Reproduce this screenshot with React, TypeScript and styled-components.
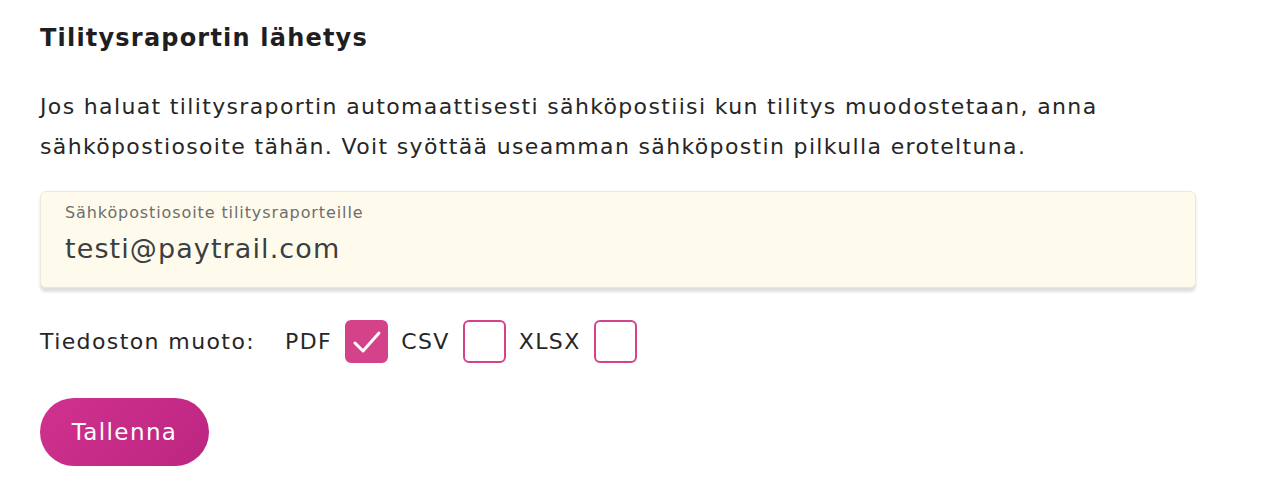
import React, { useState } from 'react';
import styled, { createGlobalStyle } from 'styled-components';

const GlobalStyle = createGlobalStyle`
  body {
    margin: 0;
    background: #fff;
    font-family: "DejaVu Sans", "Noto Sans", sans-serif;
    color: #262626;
  }
`;

const Page = styled.div`
  padding: 20px 40px;
  width: 1156px;
`;

const Heading = styled.h2`
  margin: 0;
  font-size: 24px;
  font-weight: 700;
  letter-spacing: 1.2px;
  color: #1f1f23;
  line-height: 36px;
`;

const Intro = styled.p`
  margin: 31px 0 0;
  font-size: 22px;
  letter-spacing: 1.35px;
  line-height: 40px;
  color: #262626;
`;

const Field = styled.label`
  display: flex;
  flex-direction: column;
  margin-top: 24px;
  padding: 11px 24px 18px;
  background: #fffbec;
  border: 1px solid #ece9dc;
  border-radius: 6px;
  box-shadow: 0 4px 3px rgba(0, 0, 0, 0.13);
`;

const FieldLabel = styled.span`
  font-size: 16px;
  letter-spacing: 0.9px;
  line-height: 20px;
  color: #6e6e6e;
`;

const FieldInput = styled.input`
  margin-top: 6px;
  border: none;
  background: transparent;
  padding: 0;
  font-family: inherit;
  font-size: 27px;
  letter-spacing: 1.1px;
  line-height: 40px;
  color: #3b3e42;
  outline: none;
`;

const FormatRow = styled.div`
  display: flex;
  align-items: center;
  margin-top: 32px;
  font-size: 22px;
  letter-spacing: 1.4px;
  color: #262626;
`;

const RowLabel = styled.span`
  margin-right: 30px;
`;

const Option = styled.label`
  display: flex;
  align-items: center;
  gap: 13px;
  margin-right: 13px;
  cursor: pointer;
`;

const Box = styled.span<{ $checked: boolean }>`
  display: flex;
  align-items: center;
  justify-content: center;
  width: 43px;
  height: 43px;
  box-sizing: border-box;
  border-radius: 6px;
  border: 2px solid #d4438a;
  background: ${(p) => (p.$checked ? '#d4438a' : '#fff')};
`;

const SaveButton = styled.button`
  margin-top: 35px;
  width: 169px;
  height: 68px;
  border: none;
  border-radius: 34px;
  background: linear-gradient(135deg, #d1318f 0%, #bb2680 100%);
  color: #fff;
  font-family: inherit;
  font-size: 23px;
  letter-spacing: 1.4px;
  cursor: pointer;
`;

const formats = ['PDF', 'CSV', 'XLSX'];

const App = () => {
  const [checked, setChecked] = useState<Record<string, boolean>>({ PDF: true });

  return (
    <Page>
      <GlobalStyle />
      <Heading>Tilitysraportin lähetys</Heading>
      <Intro>
        Jos haluat tilitysraportin automaattisesti sähköpostiisi kun tilitys muodostetaan, anna
        <br />
        sähköpostiosoite tähän. Voit syöttää useamman sähköpostin pilkulla eroteltuna.
      </Intro>
      <Field>
        <FieldLabel>Sähköpostiosoite tilitysraporteille</FieldLabel>
        <FieldInput defaultValue="testi@paytrail.com" />
      </Field>
      <FormatRow>
        <RowLabel>Tiedoston muoto:</RowLabel>
        {formats.map((f) => (
          <Option key={f} onClick={() => setChecked({ ...checked, [f]: !checked[f] })}>
            {f}
            <Box $checked={!!checked[f]}>
              {checked[f] && (
                <svg width="30" height="24" viewBox="0 0 30 24" fill="none">
                  <path d="M3 13l8 8L27 3" stroke="#fff" strokeWidth="3" strokeLinecap="round" strokeLinejoin="round" />
                </svg>
              )}
            </Box>
          </Option>
        ))}
      </FormatRow>
      <SaveButton>Tallenna</SaveButton>
    </Page>
  );
};

export default App;
